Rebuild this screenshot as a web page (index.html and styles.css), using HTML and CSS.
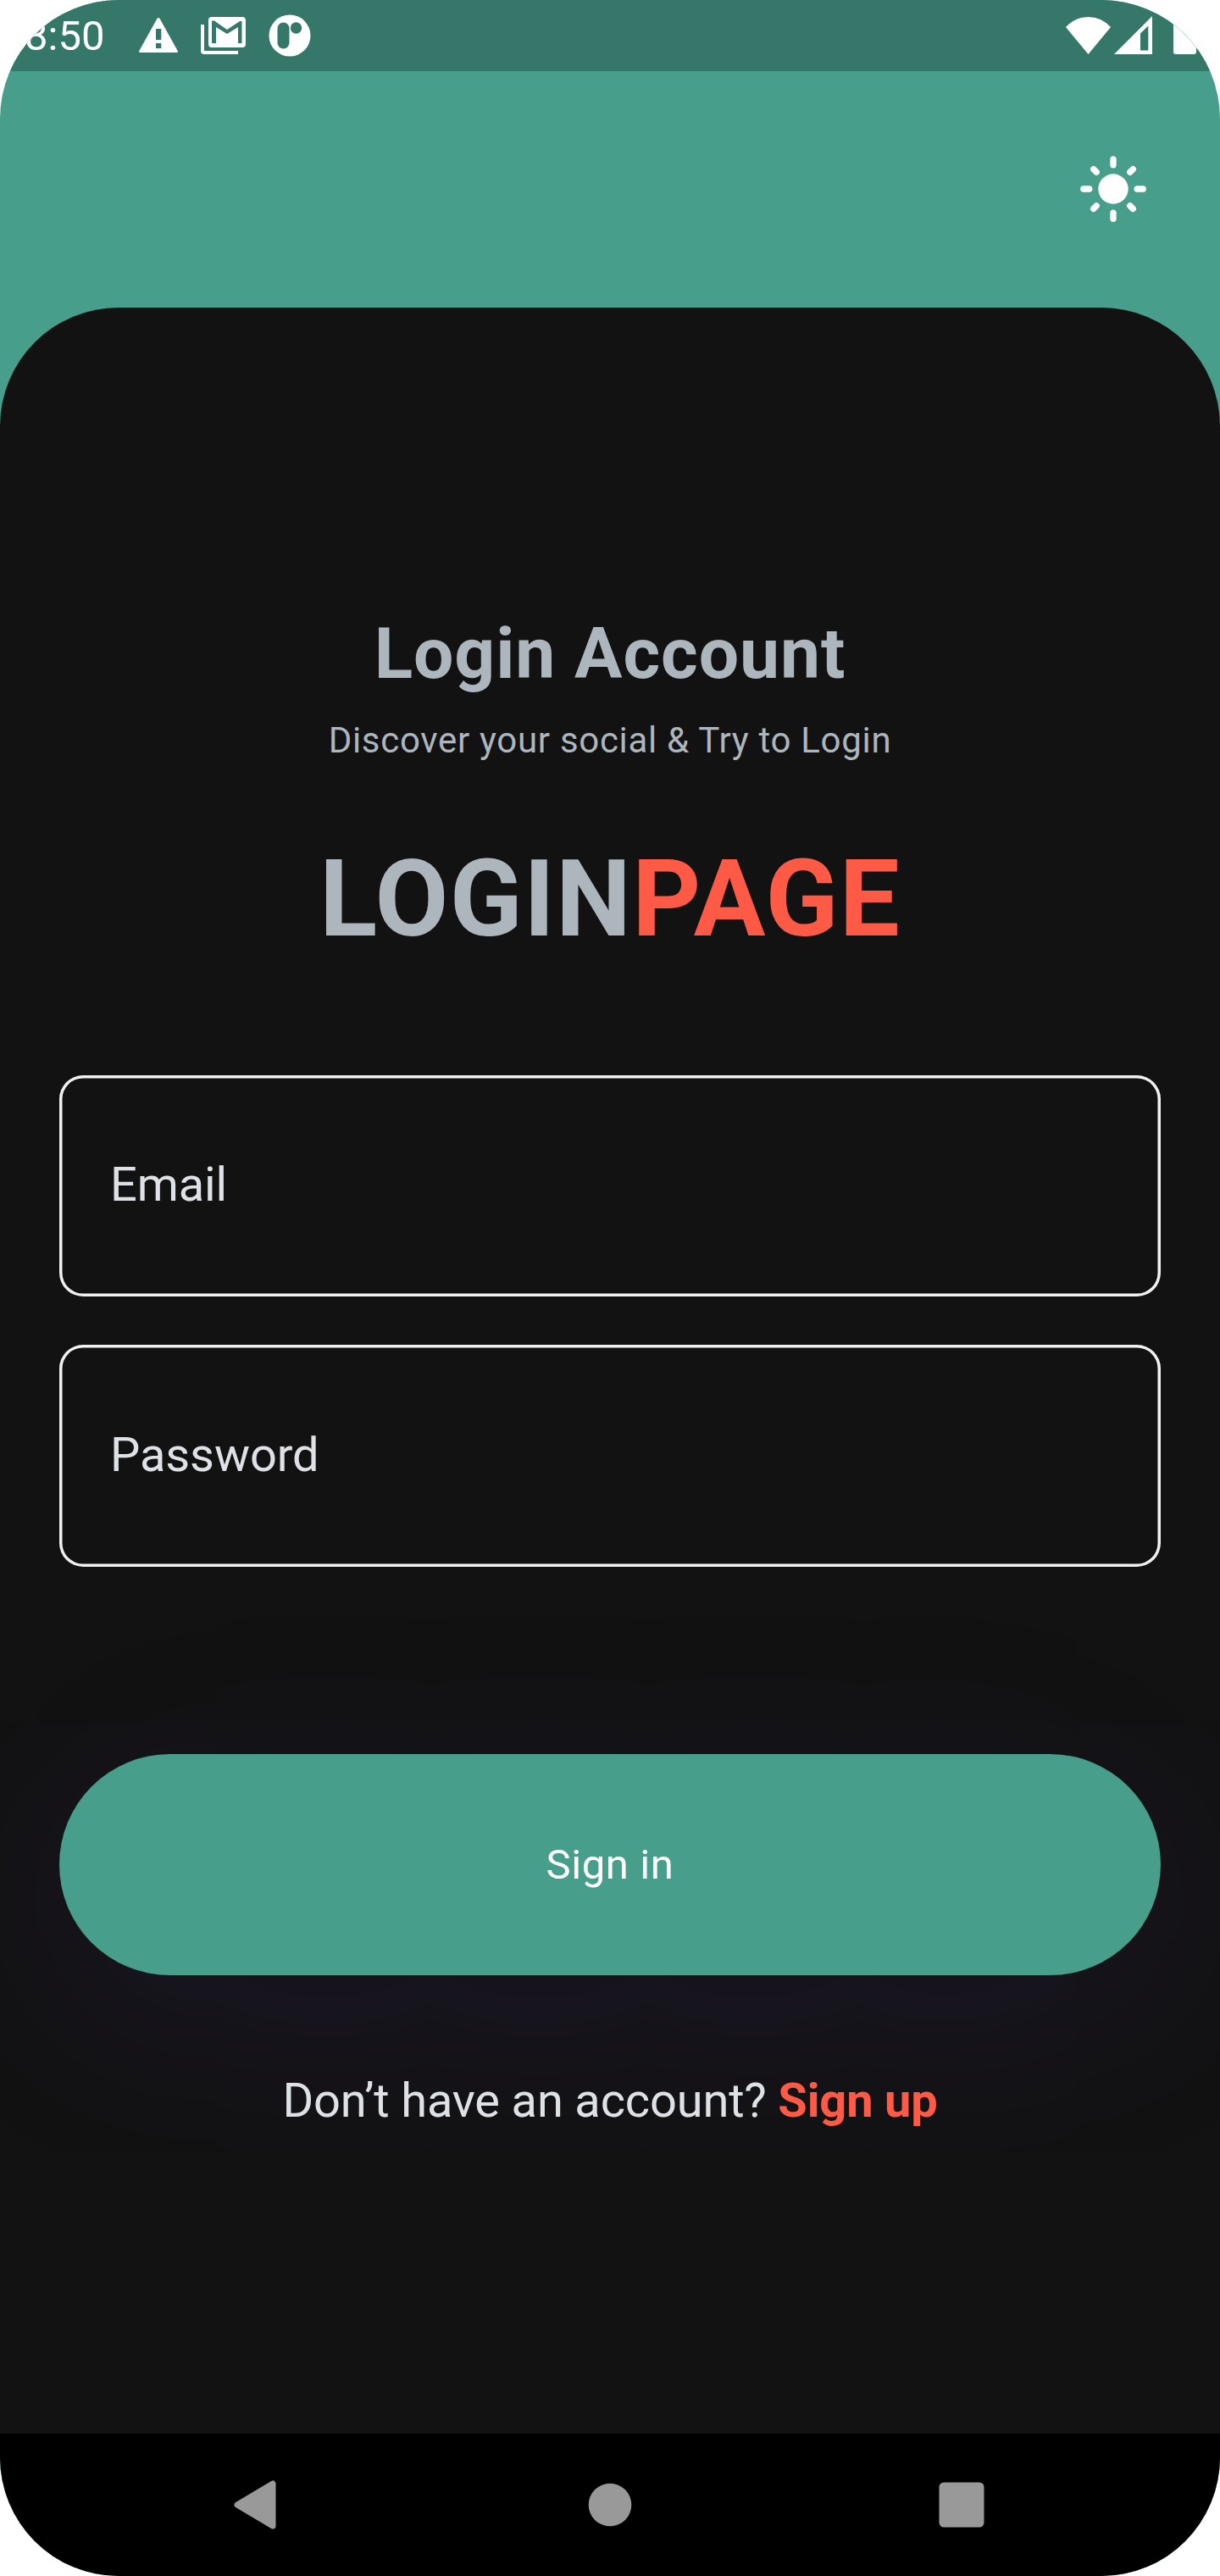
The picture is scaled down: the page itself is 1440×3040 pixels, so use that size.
FILE: index.html
```html
<!DOCTYPE html>
<html lang="en">
<head>
<meta charset="utf-8">
<title>Login Account</title>
<link rel="stylesheet" href="styles.css">
</head>
<body>
<div class="phone">
  <div class="status-bar">
    <span class="clock">8:50</span>
    <div class="notifications">
      <svg width="46" height="42" viewBox="0 0 46 42" fill="#fff"><path fill-rule="evenodd" d="M21.400 1Q23 -1 24.600 1L45.700 39Q46.500 41 44.500 41H1.500Q-.5 41 .3 39ZM20 13V26H26.300V13ZM20 30V36H26.300V30Z"/></svg>
      <svg width="53" height="44" viewBox="0 0 53 44" fill="#fff"><path d="M0 9H4V40H44V44H4Q0 44 0 40Z"/><path fill-rule="evenodd" d="M13 0H49Q53 0 53 4V32Q53 36 49 36H13Q9 36 9 32V4Q9 0 13 0ZM13 31H18V12L31 20L44 12V31H48.500V5H46L31 15L16 4.500H13Z"/></svg>
      <svg width="50" height="50" viewBox="0 0 50 50"><circle cx="25" cy="25" r="24.500" fill="#fff"/><rect x="10.500" y="9.500" width="14" height="31" rx="7" fill="#357768"/><circle cx="32.500" cy="16" r="6.700" fill="#357768"/></svg>
    </div>
    <div class="system-icons">
      <svg class="wifi" width="53" height="44" viewBox="0 0 53 44" fill="#fff"><path d="M0 12Q11 0 26.500 0T53 12L26.500 44Z"/></svg>
      <svg class="signal" width="45" height="45" viewBox="0 0 45 45" fill="#fff"><path fill-rule="evenodd" d="M45 0V45H0ZM31 20.500V40.500H40.300V11.500Z"/></svg>
      <svg class="battery" width="27" height="54" viewBox="0 0 27 54" fill="#fff"><path d="M0 7Q0 4 3 4H8V0H19V4H24Q27 4 27 7V51Q27 54 24 54H3Q0 54 0 51Z"/></svg>
    </div>
  </div>
  <header class="header">
    <svg width="80" height="80" viewBox="-40 -40 80 80" stroke="#fff" stroke-width="7.300" stroke-linecap="round"><circle r="17.700" fill="#fff" stroke="none"/><path d="M0 -35.200V-28.200M0 28.200V35.200M-35.200 0H-28.200M28.200 0H35.200M-23.300 -23.300L-19.800 -19.800M23.300 -23.300L19.800 -19.800M-23.300 23.300L-19.800 19.800M23.300 23.300L19.800 19.800"/></svg>
  </header>
  <main class="sheet">
    <h1 class="title">Login Account</h1>
    <p class="subtitle">Discover your social &amp; Try to Login</p>
    <div class="logo">LOGIN<span class="accent">PAGE</span></div>
    <div class="field">Email</div>
    <div class="field">Password</div>
    <div class="button">Sign in</div>
    <p class="signup">Don’t have an account? <b class="accent">Sign up</b></p>
  </main>
  <nav class="nav-bar">
    <svg width="54" height="58" viewBox="0 0 54 58"><path d="M6 29L48 4V54Z" fill="#999" stroke="#999" stroke-width="7" stroke-linejoin="round"/></svg>
    <svg width="54" height="54" viewBox="0 0 54 54"><circle cx="27" cy="27" r="25.300" fill="#999"/></svg>
    <svg width="54" height="54" viewBox="0 0 54 54"><rect x=".5" y=".5" width="53" height="53" rx="5.500" fill="#999"/></svg>
  </nav>
</div>
</body>
</html>
```
FILE: styles.css
```css
* { box-sizing: border-box; margin: 0; }
body { background: #fff; font-family: Roboto, sans-serif; }
.phone {
  display: flex;
  flex-direction: column;
  width: 1440px;
  height: 3040px;
  border-radius: 140px;
  overflow: hidden;
  background: #479e8a;
}
svg { display: block; flex: none; }
.status-bar {
  display: flex;
  align-items: center;
  height: 84px;
  padding: 0 28px 0 29px;
  background: #357768;
  color: #fff;
}
.clock { width: 135px; padding-top: 2px; font-size: 49px; line-height: 58px; }
.notifications { display: flex; align-items: center; gap: 27px; }
.system-icons { display: flex; align-items: flex-end; height: 44px; margin-left: auto; }
.signal { margin-left: 4px; }
.battery { margin-left: 25px; }
.header {
  display: flex;
  align-items: center;
  justify-content: flex-end;
  height: 278.700px;
  padding-right: 86px;
}
.sheet {
  display: flex;
  flex-direction: column;
  flex: 1;
  padding: 360px 70px 0;
  border-radius: 140px 140px 0 0;
  background: #121212;
  color: #adb5bd;
  text-align: center;
}
.title { font-size: 84px; line-height: 98px; letter-spacing: .900px; }
.subtitle { margin-top: 28px; font-size: 42px; line-height: 49px; letter-spacing: .700px; }
.logo { margin-top: 89px; font-size: 126px; font-weight: 700; line-height: 148px; letter-spacing: 1.300px; }
.accent { color: #ff5a45; }
.field {
  display: flex;
  align-items: center;
  height: 261.500px;
  margin-top: 57px;
  padding: 0 60px 2px;
  border-radius: 28px;
  box-shadow: inset 0 0 0 3.500px #f1f1f1;
  color: #dee2e6;
  font-size: 56px;
  letter-spacing: -.100px;
}
.logo + .field { margin-top: 134px; }
.button {
  display: flex;
  align-items: center;
  justify-content: center;
  height: 261px;
  margin-top: 221px;
  padding-top: 1px;
  border-radius: 131px;
  background: #479e8a;
  box-shadow: 0 42px 240px rgba(110, 60, 220, .13);
  color: #fff;
  font-size: 49px;
  letter-spacing: .600px;
}
.signup { position: relative; margin-top: 115px; color: #dee2e6; font-size: 56px; line-height: 66px; letter-spacing: -.170px; }
.nav-bar {
  display: flex;
  align-items: center;
  justify-content: space-between;
  height: 168px;
  padding: 0 278px 0 274px;
  background: #000;
}
.nav-bar svg:nth-child(2) { margin-left: 4px; }
```
